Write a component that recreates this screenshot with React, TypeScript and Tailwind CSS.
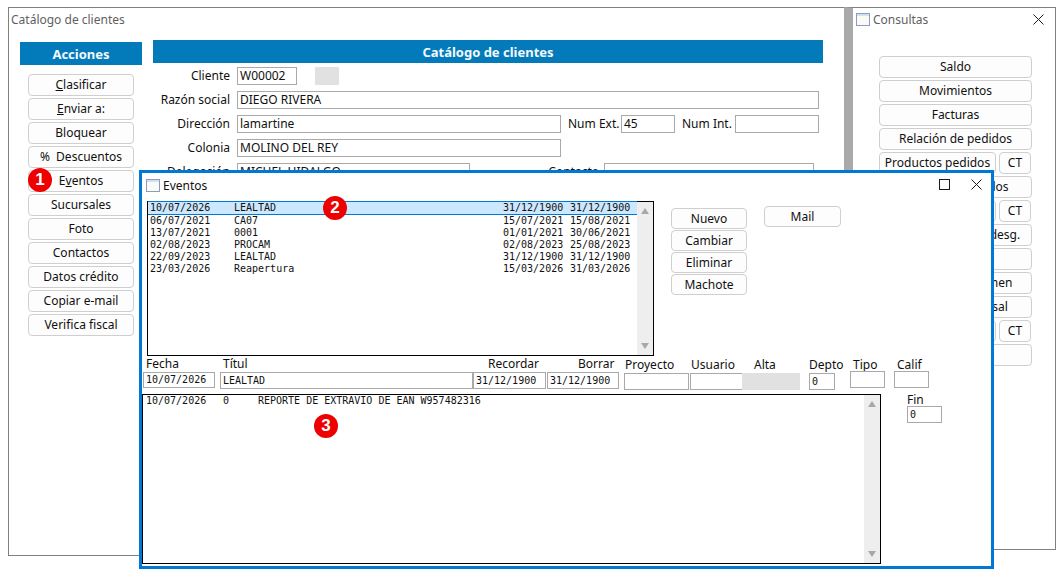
import React from "react";

const ui = "font-['Noto_Sans',sans-serif] text-[12px] leading-[16px] text-[#101010]";
const mono = "font-['DejaVu_Sans_Mono',monospace] text-[10px] leading-[12px] text-[#111]";

function Btn({ children, className = "" }: { children?: React.ReactNode; className?: string }) {
  return (
    <div className={`flex items-center justify-center whitespace-nowrap overflow-hidden rounded-[4px] border border-[#cfcfcf] bg-[#fdfdfd] ${className}`}>
      {children}
    </div>
  );
}

function Box({ children, className = "" }: { children?: React.ReactNode; className?: string }) {
  return (
    <div className={`flex items-center shrink-0 whitespace-nowrap overflow-hidden border border-[#a9a9a9] bg-white px-[2px] ${className}`}>
      {children}
    </div>
  );
}

function WinIcon() {
  return (
    <svg width="14" height="13" viewBox="0 0 14 13" className="shrink-0">
      <rect x="0.5" y="0.5" width="13" height="12" fill="#fbfbf6" stroke="#8a9bc4" />
      <rect x="1" y="1" width="12" height="2" fill="#d4dff0" />
    </svg>
  );
}

function CloseIcon() {
  return (
    <svg width="11" height="11" viewBox="0 0 11 11" className="shrink-0">
      <path d="M0.5 0.5 L10.5 10.5 M10.5 0.5 L0.5 10.5" stroke="#1a1a1a" strokeWidth="1" fill="none" />
    </svg>
  );
}

function Scrollbar({ top, bottom }: { top: string; bottom: string }) {
  return (
    <div className={`flex w-[16px] shrink-0 flex-col items-center justify-between bg-[#eeeeee] ${top} ${bottom}`}>
      <svg width="8" height="6" viewBox="0 0 8 6"><path d="M4 0 L8 6 L0 6 Z" fill="#a8a8a8" /></svg>
      <svg width="8" height="6" viewBox="0 0 8 6"><path d="M0 0 L8 0 L4 6 Z" fill="#a8a8a8" /></svg>
    </div>
  );
}

function Badge({ n, className }: { n: number; className: string }) {
  return (
    <div className={`absolute flex h-[24px] w-[24px] items-center justify-center rounded-full bg-[#ee0000] font-['Liberation_Sans',sans-serif] text-[17px] font-bold text-white ${className}`}>
      {n}
    </div>
  );
}

function FormLabel({ children }: { children: React.ReactNode }) {
  return <div className="mr-[7px] w-[77px] shrink-0 text-right">{children}</div>;
}

const acciones: React.ReactNode[] = [
  <><u>C</u>lasificar</>,
  <><u>E</u>nviar a:</>,
  "Bloquear",
  <span className="whitespace-pre">%  Descuentos</span>,
  <>E<u>v</u>entos</>,
  "Sucursales",
  "Foto",
  "Contactos",
  "Datos crédito",
  "Copiar e-mail",
  "Verifica fiscal",
];

const rows = [
  ["10/07/2026", "LEALTAD", "31/12/1900", "31/12/1900"],
  ["06/07/2021", "CA07", "15/07/2021", "15/08/2021"],
  ["13/07/2021", "0001", "01/01/2021", "30/06/2021"],
  ["02/08/2023", "PROCAM", "02/08/2023", "25/08/2023"],
  ["22/09/2023", "LEALTAD", "31/12/1900", "31/12/1900"],
  ["23/03/2026", "Reapertura", "15/03/2026", "31/03/2026"],
];

function Field({
  label, value, wrap, labelCls = "", boxCls,
}: { label: string; value?: string; wrap: string; labelCls?: string; boxCls: string }) {
  return (
    <div className={`flex shrink-0 flex-col ${wrap}`}>
      <div className={`h-[16px] whitespace-nowrap ${labelCls}`}>{label}</div>
      <Box className={`${mono} ${boxCls}`}>{value}</Box>
    </div>
  );
}

export default function App() {
  return (
    <div className={`relative h-[577px] w-[1061px] overflow-hidden bg-white ${ui}`}>
      {/* Main window */}
      <div className="absolute left-[8px] top-[7px] flex h-[549px] w-[837px] flex-col border border-[#808080] bg-white">
        <div className="flex h-[32px] items-start pl-[2px] pt-[4px] text-[#5f5f5f]">Catálogo de clientes</div>
        <div className="flex pl-[11px]">
          <div className="mt-[2px] w-[122px] shrink-0">
            <div className="flex h-[23px] items-center justify-center bg-[#037bbb] text-[13px] font-bold text-[#f4f8fb]">Acciones</div>
            <div className="ml-[8px] mt-[9px] flex w-[106px] flex-col gap-[2px]">
              {acciones.map((a, i) => (
                <Btn key={i} className="h-[22px]">{a}</Btn>
              ))}
            </div>
          </div>
          <div className="ml-[11px] w-[670px] shrink-0">
            <div className="flex h-[23px] items-center justify-center bg-[#037bbb] text-[13px] font-bold text-[#f4f8fb]">Catálogo de clientes</div>
            <div className="mt-[4px] flex flex-col gap-[6px]">
              <div className="flex h-[18px] items-center">
                <FormLabel>Cliente</FormLabel>
                <Box className="h-[18px] w-[60px]">W00002</Box>
                <div className="ml-[18px] h-[18px] w-[24px] bg-[#e1e1e1]" />
              </div>
              <div className="flex h-[18px] items-center">
                <FormLabel>Razón social</FormLabel>
                <Box className="h-[18px] w-[582px]">DIEGO RIVERA</Box>
              </div>
              <div className="flex h-[18px] items-center">
                <FormLabel>Dirección</FormLabel>
                <Box className="h-[18px] w-[324px]">lamartine</Box>
                <div className="ml-[7px] w-[53px] shrink-0">Num Ext.</div>
                <Box className="h-[18px] w-[54px]">45</Box>
                <div className="ml-[7px] w-[53px] shrink-0">Num Int.</div>
                <Box className="h-[18px] w-[84px]" />
              </div>
              <div className="flex h-[18px] items-center">
                <FormLabel>Colonia</FormLabel>
                <Box className="h-[18px] w-[324px]">MOLINO DEL REY</Box>
              </div>
              <div className="flex h-[18px] items-center">
                <FormLabel>Delegación</FormLabel>
                <Box className="h-[18px] w-[233px]">MICHEL HIDALGO</Box>
                <div className="w-[134px] shrink-0 pr-[5px] text-right">Contacto</div>
                <Box className="h-[18px] w-[210px]" />
              </div>
            </div>
          </div>
        </div>
      </div>

      {/* Consultas window */}
      <div className="absolute left-[844px] top-[7px] flex h-[543px] w-[212px] flex-col border-y border-r border-l-[9px] border-y-[#808080] border-r-[#808080] border-l-[#a9a9a9] bg-white">
        <div className="flex h-[48px] items-start pt-[5px] pl-[3px] text-[#5f5f5f]">
          <WinIcon />
          <span className="ml-[3px] -mt-[1px]">Consultas</span>
          <div className="ml-auto mr-[11px] mt-[1px]"><CloseIcon /></div>
        </div>
        <div className="ml-[26px] flex w-[153px] flex-col gap-[2px]">
          <Btn className="h-[22px]">Saldo</Btn>
          <Btn className="h-[22px]">Movimientos</Btn>
          <Btn className="h-[22px]">Facturas</Btn>
          <Btn className="h-[22px]">Relación de pedidos</Btn>
          <div className="flex gap-[3px]">
            <Btn className="h-[22px] w-[117px]">Productos pedidos</Btn>
            <Btn className="h-[22px] w-[32px]">CT</Btn>
          </div>
          <Btn className="h-[22px]">Productos surtidos</Btn>
          <div className="flex gap-[3px]">
            <Btn className="h-[22px] w-[117px]">Devoluciones</Btn>
            <Btn className="h-[22px] w-[32px]">CT</Btn>
          </div>
          <Btn className="h-[22px]">Relación pedidos desg.</Btn>
          <Btn className="h-[22px]">Estado</Btn>
          <Btn className="h-[22px]">Ventas por resumen</Btn>
          <Btn className="h-[22px]">Venta por sucursal</Btn>
          <div className="flex gap-[3px]">
            <Btn className="h-[22px] w-[117px]">Cobranza</Btn>
            <Btn className="h-[22px] w-[32px]">CT</Btn>
          </div>
          <Btn className="h-[22px]">Notas</Btn>
        </div>
      </div>

      {/* Eventos window */}
      <div className="absolute left-[139px] top-[170px] flex h-[399px] w-[855px] flex-col border-[3px] border-[#0078d7] bg-white">
        <div className="flex h-[28px] items-start pl-[4px] pt-[6px]">
          <WinIcon />
          <span className="ml-[3px] -mt-[1px]">Eventos</span>
          <div className="ml-auto mt-[0px] h-[11px] w-[11px] border border-[#1a1a1a]" />
          <div className="ml-[21px] mr-[9px]"><CloseIcon /></div>
        </div>
        <div className="flex items-start pl-[5px]">
          <div className="flex h-[155px] w-[507px] shrink-0 border border-black bg-white">
            <div className={`flex-1 ${mono}`}>
              {rows.map((r, i) => (
                <div
                  key={i}
                  className={`flex h-[12px] items-center pl-[2px] whitespace-pre ${i === 0 ? "-mt-px h-[14px] border-y border-[#0078d7] bg-[#cce8ff]" : ""}`}
                >
                  <span className="w-[84px] shrink-0">{r[0]}</span>
                  <span className="w-[269px] shrink-0">{r[1]}</span>
                  <span className="w-[67px] shrink-0">{r[2]}</span>
                  <span>{r[3]}</span>
                </div>
              ))}
            </div>
            <Scrollbar top="pt-[6px]" bottom="pb-[6px]" />
          </div>
          <div className="ml-[17px] mt-[7px] flex w-[76px] flex-col gap-[1px]">
            {["Nuevo", "Cambiar", "Eliminar", "Machote"].map((b) => (
              <Btn key={b} className="h-[21px]">{b}</Btn>
            ))}
          </div>
          <Btn className="ml-[17px] mt-[5px] h-[21px] w-[77px]">Mail</Btn>
        </div>

        <div className="flex items-start">
          <Field wrap="w-[72px] ml-[1px]" labelCls="pl-[3px]" label="Fecha" value="10/07/2026" boxCls="h-[16px]" />
          <Field wrap="w-[253px] ml-[5px]" labelCls="pl-[3px]" label="Títul" value="LEALTAD" boxCls="h-[17px]" />
          <Field wrap="w-[73px]" labelCls="pl-[15px]" label="Recordar" value="31/12/1900" boxCls="h-[17px]" />
          <Field wrap="w-[72px] ml-[1px]" labelCls="pl-[31px]" label="Borrar" value="31/12/1900" boxCls="h-[17px]" />
          <Field wrap="w-[65px] ml-[5px] pt-[1px]" labelCls="pl-[1px]" label="Proyecto" boxCls="h-[17px]" />
          <Field wrap="w-[53px] ml-[1px] pt-[1px]" labelCls="pl-[1px]" label="Usuario" boxCls="h-[17px]" />
          <div className="ml-[-1px] flex w-[58px] shrink-0 flex-col pt-[1px]">
            <div className="h-[16px] pl-[12px]">Alta</div>
            <div className="h-[17px] bg-[#e1e1e1]" />
          </div>
          <Field wrap="w-[26px] ml-[9px] pt-[1px]" label="Depto" value="0" boxCls="h-[17px]" />
          <Field wrap="w-[35px] ml-[15px]" labelCls="pl-[3px] pt-[1px] -mb-[1px]" label="Tipo" boxCls="h-[17px]" />
          <Field wrap="w-[35px] ml-[9px]" labelCls="pl-[3px] pt-[1px] -mb-[1px]" label="Calif" boxCls="h-[17px]" />
        </div>

        <div className="mt-[4px] flex items-start">
          <div className="flex h-[170px] w-[739px] shrink-0 border border-black bg-white">
            <div className={`flex h-[12px] flex-1 pl-[3px] pt-0 whitespace-pre ${mono}`}>
              <span className="w-[77px] shrink-0">10/07/2026</span>
              <span className="w-[35px] shrink-0">0</span>
              <span>REPORTE DE EXTRAVIO DE EAN W957482316</span>
            </div>
            <Scrollbar top="pt-[6px]" bottom="pb-[6px]" />
          </div>
          <div className="ml-[26px] flex flex-col pt-[-1px]">
            <div className="h-[12px] leading-[12px] -mt-[0px] pt-[0px]">Fin</div>
            <Box className={`${mono} h-[17px] w-[35px]`}>0</Box>
          </div>
        </div>
      </div>

      <Badge n={1} className="left-[28px] top-[168px]" />
      <Badge n={2} className="left-[323px] top-[196px]" />
      <Badge n={3} className="left-[314px] top-[414px]" />
    </div>
  );
}
